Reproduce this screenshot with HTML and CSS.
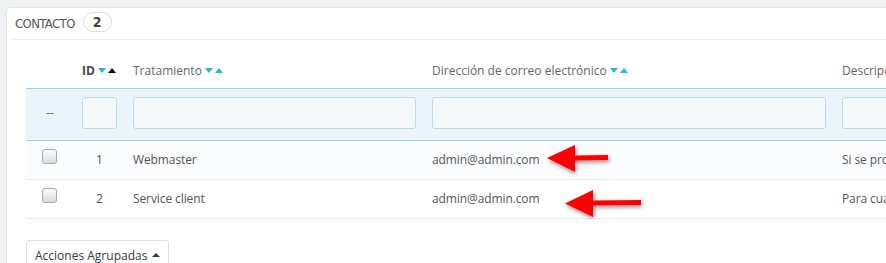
FILE: index.html
```html
<!DOCTYPE html>
<html>
<head>
    <title>Contacto</title>
    <link rel="stylesheet" href="styles.css">
</head>

<body>
    <div class="panel">
        <div class="panel-heading">
            CONTACTO <span class="badge">2</span>
        </div>

        <table class="table">
            <colgroup>
                <col class="w-check">
                <col class="w-id">
                <col class="w-name">
                <col class="w-mail">
                <col>
            </colgroup>
            <thead>
                <tr class="nodrag">
                    <th class="col-check"></th>
                    <th><span class="title-strong">ID</span><span class="sort"><i class="down"></i><i class="up active"></i></span></th>
                    <th>Tratamiento<span class="sort"><i class="down"></i><i class="up"></i></span></th>
                    <th>Dirección de correo electrónico<span class="sort"><i class="down"></i><i class="up"></i></span></th>
                    <th>Descripción</th>
                </tr>
                <tr class="filter">
                    <th class="col-check">--</th>
                    <th><input type="text" class="filter-input"></th>
                    <th><input type="text" class="filter-input"></th>
                    <th><input type="text" class="filter-input"></th>
                    <th><input type="text" class="filter-input"></th>
                </tr>
            </thead>
            <tbody>
                <tr class="odd">
                    <td class="col-check"><span class="checkbox"></span></td>
                    <td class="center">1</td>
                    <td>Webmaster</td>
                    <td>admin@admin.com</td>
                    <td>Si se produce un problema técnico</td>
                </tr>
                <tr>
                    <td class="col-check"><span class="checkbox"></span></td>
                    <td class="center">2</td>
                    <td>Service client</td>
                    <td>admin@admin.com</td>
                    <td>Para cualquier pregunta</td>
                </tr>
            </tbody>
        </table>

        <div class="bulk">
            <button class="btn">Acciones Agrupadas <span class="caret"></span></button>
        </div>
    </div>

    <!-- flechas rojas de la captura -->
    <svg class="arrows" width="886" height="263" viewBox="0 0 886 263">
        <defs>
            <filter id="shadow" x="-20%" y="-40%" width="140%" height="180%">
                <feDropShadow dx="1" dy="2" stdDeviation="2" flood-color="#000" flood-opacity="0.45"/>
            </filter>
        </defs>
        <g fill="#f00" filter="url(#shadow)">
            <polygon points="547,158 575,145 575,155.5 608,155 608,160 575,160.5 575,172"/>
            <polygon points="565,203.5 593,190 593,200.5 641,200 641,205 593,205.5 593,217"/>
        </g>
    </svg>
</body>
</html>
```

FILE: styles.css
```css
html, body {
    margin: 0;
    overflow: hidden;
}

body {
    background: #eff1f2;
    font-family: 'Open Sans', 'Liberation Sans', sans-serif;
    font-size: 12px;
    color: #666;
    padding: 7px 0 0 6px;
    width: 886px;
    height: 263px;
    box-sizing: border-box;
    position: relative;
}

.panel {
    background: #fff;
    border: 1px solid #e2e4e6;
    border-radius: 5px;
    width: 1000px;
    height: 300px;
    box-sizing: border-box;
}

.panel-heading {
    margin-left: 3px;
    padding-left: 5px;
    height: 31px;
    line-height: 31px;
    border-bottom: 1px solid #eee;
    font-family: 'DejaVu Sans Condensed', 'Liberation Sans Narrow', 'Open Sans', sans-serif;
    font-stretch: condensed;
    font-size: 13px;
    color: #555;
    letter-spacing: -0.6px;
}

.badge {
    display: inline-block;
    margin-left: 5px;
    padding: 0 9px;
    height: 18px;
    line-height: 18px;
    border: 1px solid #ddd;
    border-radius: 10px;
    font-weight: bold;
    font-size: 14px;
    letter-spacing: 0;
    color: #444;
    vertical-align: 1px;
}

.table {
    margin-left: 19px;
    border-collapse: collapse;
    table-layout: fixed;
    width: 960px;
}

.w-check { width: 48px; }
.w-id { width: 51px; }
.w-name { width: 299px; }
.w-mail { width: 410px; }

.table th, .table td {
    padding: 0 8px;
    text-align: left;
    white-space: nowrap;
    overflow: hidden;
}

.col-check { text-align: center !important; }

.nodrag th {
    height: 48px;
    vertical-align: bottom;
    padding-bottom: 9px;
    font-weight: normal;
    color: #666;
    box-sizing: border-box;
}

.title-strong {
    font-weight: bold;
    color: #444;
}

.sort {
    display: inline-block;
    margin-left: 3px;
    vertical-align: 2px;
}

.sort i {
    display: inline-block;
    width: 0;
    height: 0;
    border-left: 4px solid transparent;
    border-right: 4px solid transparent;
    margin-right: 2px;
}

.sort .down { border-top: 5px solid #25b9d7; }
.sort .up { border-bottom: 5px solid #25b9d7; }
.sort .up.active { border-bottom-color: #000; }

.filter th {
    background: #ebf4fb;
    border-top: 1px solid #a0d0eb;
    border-bottom: 1px solid #a0d0eb;
    padding-top: 8px;
    padding-bottom: 11px;
    font-weight: normal;
    color: #666;
}

.filter-input {
    display: block;
    width: 100%;
    height: 32px;
    box-sizing: border-box;
    background: #f5f8f9;
    border: 1px solid #bbdcee;
    border-radius: 3px;
}

tbody td {
    height: 38px;
    border-bottom: 1px solid #eaedef;
    color: #555;
    letter-spacing: -0.1px;
}

tbody tr.odd td { background: #fbfcfd; }

.center { text-align: center !important; }

.checkbox {
    display: inline-block;
    width: 13px;
    height: 13px;
    border: 1px solid #a9a9a9;
    border-radius: 3px;
    background: linear-gradient(#fcfcfc, #dcdcdc);
    vertical-align: -5px;
    margin-left: -2px;
    position: relative;
    top: -5px;
}

.bulk {
    padding: 21px 0 0 19px;
}

.btn {
    font-family: 'Open Sans', 'Liberation Sans', sans-serif;
    font-size: 12px;
    color: #363a41;
    background: #fff;
    border: 1px solid #dde0e2;
    border-radius: 3px;
    padding: 6px 8px 8px 8px;
}

.caret {
    display: inline-block;
    border-left: 4px solid transparent;
    border-right: 4px solid transparent;
    border-bottom: 4px solid #363a41;
    vertical-align: 3px;
    margin-left: 1px;
}

.arrows {
    position: absolute;
    left: 0;
    top: 0;
    pointer-events: none;
}
```
